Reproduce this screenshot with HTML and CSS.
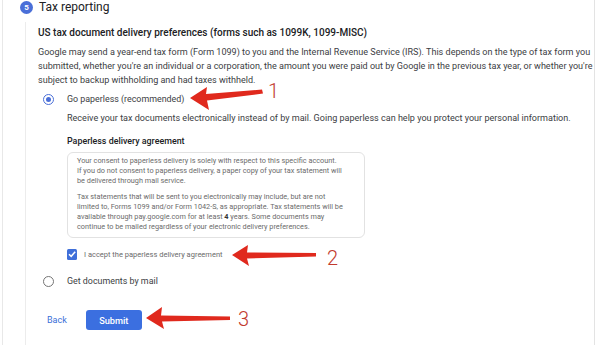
FILE: index.html
```html
<!DOCTYPE html>
<html lang="en">
<head>
<meta charset="utf-8">
<title>Tax reporting</title>
<link rel="stylesheet" href="styles.css">
</head>
<body>
<div class="card">
  <div class="step-head">
    <span class="badge">5</span>
    <span class="title">Tax reporting</span>
  </div>
  <div class="step-body">
    <h3 class="subhead">US tax document delivery preferences (forms such as 1099K, 1099-MISC)</h3>
    <p class="intro">Google may send a year-end tax form (Form 1099) to you and the Internal Revenue Service (IRS). This depends on the type of tax form you submitted, whether you're an individual or a corporation, the amount you were paid out by Google in the previous tax year, or whether you're subject to backup withholding and had taxes withheld.</p>

    <div class="option">
      <span class="radio checked"><span class="dot"></span></span>
      <span class="option-label">Go paperless (recommended)</span>
    </div>
    <div class="option-detail">
      <p class="detail-text">Receive your tax documents electronically instead of by mail. Going paperless can help you protect your personal information.</p>
      <h4 class="agree-title">Paperless delivery agreement</h4>
      <div class="agreement">
        <p>Your consent to paperless delivery is solely with respect to this specific account.<br>If you do not consent to paperless delivery, a paper copy of your tax statement will<br>be delivered through mail service.</p>
        <p>Tax statements that will be sent to you electronically may include, but are not<br>limited to, Forms 1099 and/or Form 1042-S, as appropriate. Tax statements will be<br>available through pay.google.com for at least <b>4</b> years. Some documents may<br>continue to be mailed regardless of your electronic delivery preferences.</p>
      </div>
      <div class="check-row">
        <span class="checkbox">
          <svg viewBox="0 0 10 10" width="10" height="10"><path d="M2 5.2 L4.2 7.3 L8.2 2.8" fill="none" stroke="#fff" stroke-width="1.5"/></svg>
        </span>
        <span class="check-label">I accept the paperless delivery agreement</span>
      </div>
    </div>

    <div class="option option-mail">
      <span class="radio"></span>
      <span class="option-label">Get documents by mail</span>
    </div>

    <div class="actions">
      <a class="back" href="#">Back</a>
      <button class="submit" type="button">Submit</button>
    </div>
  </div>

  <svg class="annotations" width="600" height="345" viewBox="0 0 600 345">
    <polygon fill="#e0291d" points="190,98 207,87 206,94 262,89.5 263,93.5 207,100.5 209,110"/>
    <text x="268" y="98" class="num">1</text>
    <polygon fill="#e0291d" points="232,255 248,245 247,252.5 316,253 316,256.5 247,258.5 249,266"/>
    <text x="327" y="265" class="num">2</text>
    <polygon fill="#e0291d" points="146,318 162,307 161,315.5 230,316.5 230,320 162,321.5 164,329"/>
    <text x="238" y="326" class="num">3</text>
  </svg>
</div>
</body>
</html>
```

FILE: styles.css
```css
* { box-sizing: border-box; }
html, body {
  margin: 0;
  padding: 0;
  background: #fff;
}
body {
  font-family: Roboto, "Liberation Sans", Arial, sans-serif;
  color: #3c4043;
  width: 600px;
  height: 345px;
  overflow: hidden;
}
.card {
  position: relative;
  margin-left: 2px;
  width: 593px;
  height: 345px;
  border-left: 1px solid #e8e8e8;
  border-right: 1px solid #e3e3e3;
}
.step-head {
  display: flex;
  align-items: center;
  height: 14px;
  padding-left: 17px;
  gap: 6px;
}
.badge {
  width: 13px;
  height: 13px;
  border-radius: 50%;
  background: #4a6fd8;
  color: #fff;
  font-size: 8px;
  font-weight: 700;
  display: flex;
  align-items: center;
  justify-content: center;
}
.title {
  font-size: 12px;
  color: #202124;
  line-height: 14px;
}
.step-body {
  margin-left: 22px;
  padding-left: 12px;
  border-left: 1px solid #ececec;
  margin-top: 8px;
  padding-top: 4px;
  height: 331px;
}
.subhead {
  margin: 0;
  font-size: 10px;
  font-weight: 500;
  line-height: 14px;
  color: #202124;
}
.intro {
  margin: 5px 0 0;
  font-size: 9.05px;
  line-height: 14px;
  color: #3c4043;
}
.option {
  display: flex;
  align-items: center;
  height: 14px;
  margin-top: 5px;
  gap: 8px;
}
.radio {
  width: 11px;
  height: 11px;
  border-radius: 50%;
  border: 1.5px solid #757575;
  margin-left: 5px;
  display: flex;
  align-items: center;
  justify-content: center;
}
.radio.checked {
  border-color: #4a6fd8;
}
.dot {
  width: 5px;
  height: 5px;
  border-radius: 50%;
  background: #4a6fd8;
}
.option-label {
  font-size: 8.9px;
  color: #3c4043;
  margin-left: 5px;
}
.option-detail {
  padding-left: 29px;
}
.detail-text {
  margin: 5px 0 0;
  font-size: 9.05px;
  line-height: 14px;
  color: #3c4043;
}
.agree-title {
  margin: 9px 0 0;
  font-size: 8.9px;
  font-weight: 500;
  line-height: 14px;
  color: #202124;
}
.agreement {
  margin-top: 4px;
  width: 298px;
  border: 1px solid #e2e2e2;
  border-radius: 6px;
  padding: 3px 4px 5px 9px;
}
.agreement p {
  margin: 0;
  font-size: 7.3px;
  line-height: 10px;
  color: #6b6b6b;
  white-space: nowrap;
}
.agreement p + p {
  margin-top: 6px;
}
.agreement b {
  color: #333;
}
.check-row {
  display: flex;
  align-items: center;
  margin-top: 10px;
  height: 12px;
  gap: 7px;
}
.checkbox {
  width: 10px;
  height: 11px;
  border-radius: 1.5px;
  background: #3f6fd9;
  display: flex;
  align-items: center;
  justify-content: center;
}
.check-label {
  font-size: 7.5px;
  color: #6b6b6b;
}
.option-mail {
  margin-top: 14px;
}
.actions {
  display: flex;
  align-items: center;
  gap: 10px;
  margin-top: 22px;
}
.back {
  font-size: 9px;
  color: #3b6fd8;
  text-decoration: none;
  padding: 0 9px;
}
.submit {
  width: 56px;
  height: 20px;
  border: 0;
  border-radius: 3px;
  background: #3b6fe0;
  color: #fff;
  font-family: Roboto, "Liberation Sans", Arial, sans-serif;
  font-size: 9.2px;
  font-weight: 500;
  padding: 0;
}
.annotations {
  position: absolute;
  left: -3px;
  top: 0;
  pointer-events: none;
}
.num {
  font-family: Roboto, "Liberation Sans", Arial, sans-serif;
  font-size: 20px;
  font-weight: 300;
  fill: #c23a2e;
}
```
